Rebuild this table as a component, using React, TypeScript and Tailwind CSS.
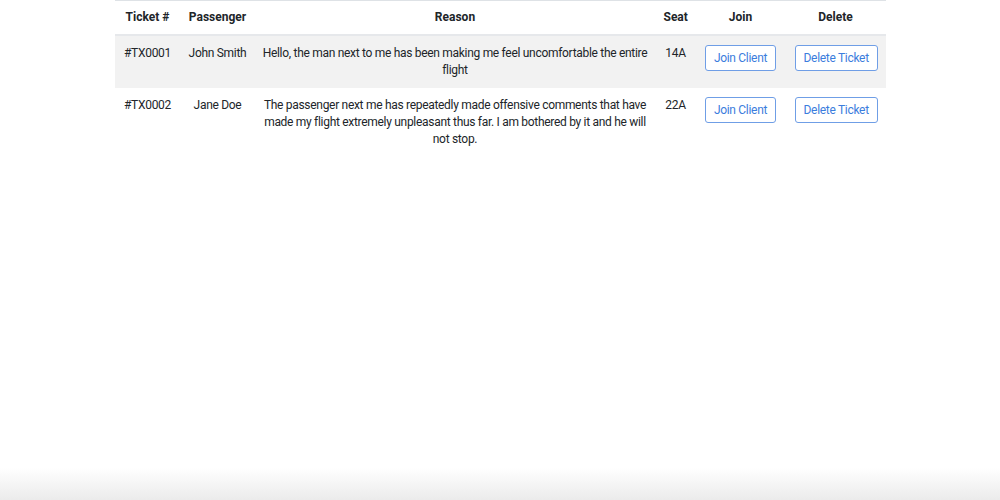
import React from "react";

interface Ticket {
  id: string;
  passenger: string;
  reason: string;
  seat: string;
}

const tickets: Ticket[] = [
  {
    id: "#TX0001",
    passenger: "John Smith",
    reason:
      "Hello, the man next to me has been making me feel uncomfortable the entire flight",
    seat: "14A",
  },
  {
    id: "#TX0002",
    passenger: "Jane Doe",
    reason:
      "The passenger next me has repeatedly made offensive comments that have made my flight extremely unpleasant thus far. I am bothered by it and he will not stop.",
    seat: "22A",
  },
];

const btn =
  "rounded-[3px] border border-[#6f9ee6] bg-white px-[8px] py-[4px] text-[12px] leading-[16px] tracking-[-0.3px] text-[#3b7ddd] whitespace-nowrap";

const App = () => {
  return (
    <div
      className="relative h-[500px] w-full overflow-hidden bg-white text-[#212529]"
      style={{ fontFamily: 'Roboto, "Liberation Sans", Arial, sans-serif' }}
    >
      <div className="mx-auto w-[771px]">
        <table className="w-full table-fixed border-collapse text-center text-[12px] leading-[17px]">
          <colgroup>
            <col className="w-[66px]" />
            <col className="w-[74px]" />
            <col className="w-[401px]" />
            <col className="w-[40px]" />
            <col className="w-[90px]" />
            <col className="w-[100px]" />
          </colgroup>
          <thead>
            <tr className="border-t border-[#dee2e6] border-b-2 border-b-[#e6e8eb]">
              <th className="p-[8px] font-bold">Ticket #</th>
              <th className="p-[8px] font-bold">Passenger</th>
              <th className="p-[8px] font-bold">Reason</th>
              <th className="p-[8px] font-bold">Seat</th>
              <th className="p-[8px] font-bold">Join</th>
              <th className="p-[8px] font-bold">Delete</th>
            </tr>
          </thead>
          <tbody className="tracking-[-0.3px]">
            {tickets.map((t, i) => (
              <tr key={t.id} className={i % 2 === 0 ? "bg-[#f2f2f2]" : ""}>
                <td className="p-[9px] align-top">{t.id}</td>
                <td className="px-[4px] py-[9px] align-top">{t.passenger}</td>
                <td className="px-[6px] py-[9px] align-top">{t.reason}</td>
                <td className="p-[9px] align-top">{t.seat}</td>
                <td className="p-[9px] align-top">
                  <button className={btn}>Join Client</button>
                </td>
                <td className="p-[9px] align-top">
                  <button className={btn}>Delete Ticket</button>
                </td>
              </tr>
            ))}
          </tbody>
        </table>
      </div>

      <div className="absolute inset-x-0 bottom-0 h-[32px] bg-gradient-to-b from-white to-[#ebebeb]" />
    </div>
  );
};

export default App;
